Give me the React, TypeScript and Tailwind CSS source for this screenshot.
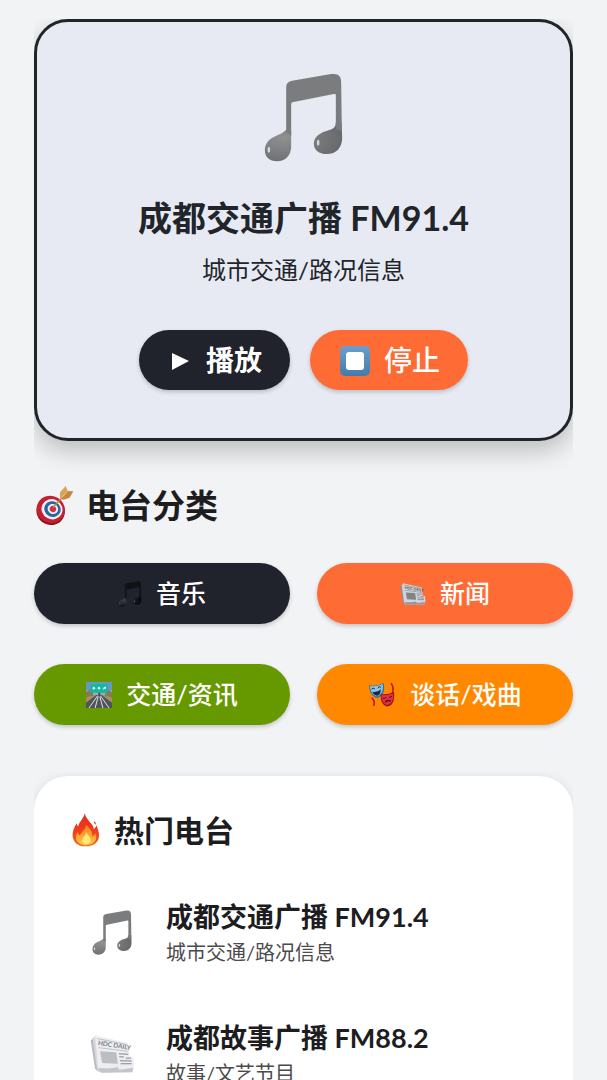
import type { ReactNode } from "react";

type IconProps = { className?: string };

function MusicNote({ className, tone = "gray" }: IconProps & { tone?: "gray" | "black" }) {
  const gray = tone === "gray";
  const fill = gray ? "#7b7c7e" : "#101216";
  const shade = gray ? "#68696c" : "#050608";
  return (
    <svg viewBox="66 38 236 267" className={className} aria-hidden="true">
      <defs>
        <radialGradient id={`note-${tone}`} cx="0.25" cy="0.4" r="0.75">
          <stop offset="0" stopColor={gray ? "#8f9092" : "#3d4047"} />
          <stop offset="1" stopColor={shade} />
        </radialGradient>
      </defs>
      <path
        fill={`url(#note-${tone})`}
        d="M132 208C124 217 112 222 101 227C80 236 68 250 68 270C68 290 82 303 104 303C130 303 147 285 147 258V208ZM281 186C281 200 275 205 262 209C235 216 215 228 215 250C215 268 230 281 254 281C282 281 300 262 300 232L298 186Z"
      />
      <path
        fill={fill}
        d="M132 214V82C132 68 138 64 150 61L262 42C288 37 297 46 297 66L299 212L281 206V104C281 101 279 100 275 101L154 125C149 126 147 128 147 133V226Z"
      />
      <ellipse cx="80" cy="268" rx="4" ry="9" fill={gray ? "#d6d7da" : "#77797e"} />
      <ellipse cx="228" cy="247" rx="4" ry="9" fill={gray ? "#d6d7da" : "#77797e"} />
    </svg>
  );
}

function Newspaper({ className, dim = false }: IconProps & { dim?: boolean }) {
  return (
    <svg viewBox="64 440 134 118" className={className} aria-hidden="true">
      <path fill={dim ? "#8b8d90" : "#b9bbc0"} d="M66 459L82 444L96 553Q84 551 79 542Z" />
      <path fill={dim ? "#c9cbce" : "#d5d7db"} d="M72 452L84 444L94 552Q86 549 84 540Z" />
      <path
        fill={dim ? "#d3d5d8" : "#eceef1"}
        d="M79 443L176 466L182 507L193 511Q198 535 190 553L98 555Q89 552 88 540Z"
      />
      <path fill={dim ? "#94969a" : "#c3c5ca"} d="M90 540Q120 545 146 538L152 546L193 540L190 553L98 555Q90 551 90 540Z" />
      <text
        x="87"
        y="472"
        transform="rotate(9 87 472)"
        fontSize="19"
        fontWeight="700"
        fontFamily="Lato, sans-serif"
        fill={dim ? "#4c4e52" : "#7c7e83"}
      >
        HDC DAILY
      </text>
      <path stroke={dim ? "#606266" : "#a9abb0"} strokeWidth="2" d="M85 453L175 471M89 480L178 491" />
      <path fill={dim ? "#808286" : "#bcbec3"} d="M94 491L142 494L147 528L100 526Z" />
      <path
        stroke={dim ? "#606266" : "#85878c"}
        strokeWidth="3"
        d="M150 498L178 500M151 507L165 508M171 512L186 511M153 519L188 520M155 528L188 528"
      />
    </svg>
  );
}

function Target({ className }: IconProps) {
  return (
    <svg viewBox="0 0 120 120" className={className} aria-hidden="true">
      <g transform="rotate(28 50 74)">
        <ellipse cx="52" cy="78" rx="43" ry="41" fill="#8f1220" />
        <ellipse cx="50" cy="73" rx="43" ry="40" fill="#c81f30" />
        <ellipse cx="53" cy="71" rx="32" ry="30" fill="#f3f1f1" />
        <ellipse cx="54" cy="70" rx="25" ry="23" fill="#2d63a0" />
        <ellipse cx="55" cy="69" rx="16" ry="15" fill="#f3f1f1" />
        <ellipse cx="55" cy="69" rx="10" ry="9" fill="#c93545" />
      </g>
      <path stroke="#b98545" strokeWidth="4" strokeLinecap="round" d="M58 66L92 30" />
      <path fill="#dba25c" d="M78 39L78 22L95 3L101 17L86 37Z" />
      <path fill="#c78641" d="M82 42L98 18L118 19L107 38L89 44Z" />
      <path stroke="#f0c78c" strokeWidth="3" d="M84 37L102 17" />
    </svg>
  );
}

function Motorway({ className }: IconProps) {
  return (
    <svg viewBox="0 0 80 80" className={className} aria-hidden="true">
      <rect width="80" height="80" fill="#6797c4" />
      <path fill="#8fb2d2" d="M0 26H80V48H0Z" />
      <path fill="#8a7a50" d="M0 31L14 22L22 42H60L68 23L80 32V60H0Z" />
      <path fill="#a5905f" d="M0 48L24 39H56L80 48V80H0Z" />
      <path fill="#505358" d="M32 40H48L80 64V80H0V64Z" />
      <path stroke="#e4e6e8" strokeWidth="3" d="M36 42L9 80M44 42L71 80M38 43L28 80M42 43L52 80" />
      <path stroke="#64747a" strokeWidth="3" d="M19 12V44M61 12V44" />
      <rect x="13" y="6" width="54" height="27" rx="4" fill="#16b79b" />
      <path fill="#e9fffa" d="M24 14l5 5-5 5-5-5ZM40 14l5 5-5 5-5-5ZM54 16L62 14L60 23L57 20L53 24L51 21L55 19Z" />
      <path fill="#3f5044" d="M38 33h6v12h-6Z" />
    </svg>
  );
}

function Masks({ className }: IconProps) {
  return (
    <svg viewBox="0 0 84 80" className={className} aria-hidden="true">
      <path fill="none" stroke="#c5172c" strokeWidth="5" d="M70 4Q80 18 74 34T78 50M10 48Q22 58 16 74" />
      <path fill="#356f9f" d="M2 10Q22 15 47 3Q52 28 42 40Q30 53 20 47Q3 38 2 10Z" />
      <path fill="#8fc2e5" d="M5 12Q24 15 44 6Q47 28 38 37Q27 47 20 42Q6 33 5 12Z" />
      <path fill="#152b44" d="M12 30Q27 34 39 22Q37 42 26 42Q17 41 12 30Z" />
      <path fill="none" stroke="#152b44" strokeWidth="3" d="M10 22Q15 17 20 21M29 19Q34 12 39 16" />
      <path fill="#9f1222" d="M38 37Q58 40 79 31Q82 58 71 70Q58 80 47 70Q37 61 38 37Z" />
      <path fill="#e0313f" d="M41 40Q60 42 76 35Q79 56 68 66Q58 74 49 67Q40 58 41 40Z" />
      <path fill="#4a0911" d="M50 64Q54 53 61 55Q69 54 70 60Q60 57 50 64Z" />
      <path fill="none" stroke="#4a0911" strokeWidth="3" d="M45 50Q50 53 54 47M64 47Q69 48 73 43" />
    </svg>
  );
}

function Fire({ className }: IconProps) {
  return (
    <svg viewBox="0 0 84 104" className={className} aria-hidden="true">
      <defs>
        <linearGradient id="flame-outer" x1="0" y1="0" x2="0" y2="1">
          <stop offset="0" stopColor="#e5281c" />
          <stop offset="0.55" stopColor="#f0401d" />
          <stop offset="1" stopColor="#ee6a1c" />
        </linearGradient>
        <linearGradient id="flame-inner" x1="0" y1="0" x2="0" y2="1">
          <stop offset="0" stopColor="#fb7a1e" />
          <stop offset="1" stopColor="#ffc940" />
        </linearGradient>
      </defs>
      <path
        fill="url(#flame-outer)"
        d="M38 1C36 16 21 27 18 41C15 38 14 34 14 31C6 42 1 54 1 67C1 89 18 102 41 102C65 102 82 89 82 68C82 57 77 49 75 38C72 42 69 46 66 50C65 40 60 34 54 28C46 20 41 12 38 1Z"
      />
      <path fill="#e93a1d" d="M66 25Q73 27 72 36Q65 33 66 25Z" />
      <path
        fill="url(#flame-inner)"
        d="M42 36C43 50 27 56 24 69C20 66 17 62 16 57C8 72 10 86 22 93C34 101 54 100 65 91C75 83 75 71 70 62C68 67 65 70 61 72C63 56 53 46 42 36Z"
      />
      <path fill="#ffe87a" d="M42 57C42 70 30 74 30 85C31 98 56 98 56 84C57 74 47 68 42 57Z" />
    </svg>
  );
}

function PlayIcon() {
  return (
    <svg viewBox="0 0 25 30" className="w-[25px] h-[30px]" aria-hidden="true">
      <path fill="#fff" d="M5 8L22 16L5 25Z" />
    </svg>
  );
}

function StopIcon() {
  return (
    <svg viewBox="0 0 32 32" className="size-8" aria-hidden="true">
      <defs>
        <linearGradient id="stop-key" x1="0" y1="0" x2="0" y2="1">
          <stop offset="0" stopColor="#6a9fcb" />
          <stop offset="1" stopColor="#467aa8" />
        </linearGradient>
      </defs>
      <rect x="2" y="2" width="30" height="30" rx="5" fill="url(#stop-key)" />
      <rect x="8" y="8" width="18" height="18" rx="3" fill="#fff" />
    </svg>
  );
}

const categories: { name: string; color: string; icon: ReactNode }[] = [
  { name: "音乐", color: "bg-[#20222c]", icon: <MusicNote tone="black" className="w-6 h-[26px]" /> },
  { name: "新闻", color: "bg-[#ff6b35]", icon: <Newspaper dim className="w-[26px] h-6" /> },
  { name: "交通/资讯", color: "bg-[#669900]", icon: <Motorway className="size-[26px]" /> },
  { name: "谈话/戏曲", color: "bg-[#ff8800]", icon: <Masks className="w-7 h-[26px]" /> },
];

const stations: { name: string; desc: string; icon: ReactNode }[] = [
  { name: "成都交通广播 FM91.4", desc: "城市交通/路况信息", icon: <MusicNote className="w-10 h-[45px]" /> },
  { name: "成都故事广播 FM88.2", desc: "故事/文艺节目", icon: <Newspaper className="w-[45px] h-10" /> },
];

function PlayerCard() {
  return (
    <section className="flex flex-col items-center rounded-[34px] border-[3px] border-[#212429] bg-[#e7eaf2] pt-[51px] pb-12 text-[#212429] shadow-[0_10px_24px_rgba(0,0,0,0.22)] [clip-path:inset(0_0_-32px_0)]">
      <MusicNote className="w-[79px] h-[89px]" />
      <h1 className="mt-[34px] text-[34px] leading-[44px] font-bold">成都交通广播 FM91.4</h1>
      <p className="mt-[14px] text-[24px] leading-8">城市交通/路况信息</p>
      <div className="mt-11 flex gap-5 text-[28px] text-white">
        <button
          type="button"
          className="flex h-[60px] items-center gap-[14px] rounded-full bg-[#20222c] px-7 font-bold shadow-[0_2px_4px_rgba(0,0,0,0.2)]"
        >
          <PlayIcon />
          播放
        </button>
        <button
          type="button"
          className="flex h-[60px] items-center gap-[14px] rounded-full bg-[#ff6b35] px-7 font-medium shadow-[0_2px_4px_rgba(0,0,0,0.2)]"
        >
          <StopIcon />
          停止
        </button>
      </div>
    </section>
  );
}

function Categories() {
  return (
    <section className="mt-[42px]">
      <h2 className="flex items-center gap-3 text-[33px] leading-[44px] font-bold">
        <Target className="size-10" />
        电台分类
      </h2>
      <div className="mt-9 grid grid-cols-2 gap-x-[27px] gap-y-10">
        {categories.map((c) => (
          <button
            key={c.name}
            type="button"
            className={`${c.color} flex h-[61px] items-center justify-center gap-[14px] rounded-full text-[25px] font-medium text-white shadow-[0_2px_4px_rgba(0,0,0,0.2)]`}
          >
            {c.icon}
            {c.name}
          </button>
        ))}
      </div>
    </section>
  );
}

function HotStations() {
  return (
    <section className="mt-[51px] rounded-[34px] bg-white pt-[34px] pb-9 shadow-[0_2px_12px_rgba(0,0,0,0.1)] [clip-path:inset(-4px_0_-32px_0)]">
      <h2 className="flex items-center gap-3 pl-9 text-[30px] leading-10 font-bold">
        <Fire className="w-8 h-[34px]" />
        热门电台
      </h2>
      <ul className="mt-[22px]">
        {stations.map((s) => (
          <li key={s.name} className="flex h-[121px] items-center gap-7 pl-[52px]">
            <span className="flex w-[52px] justify-center">{s.icon}</span>
            <div>
              <h3 className="text-[27px] leading-[38px] font-bold">{s.name}</h3>
              <p className="text-[20px] leading-8 text-[#4b4b4d]">{s.desc}</p>
            </div>
          </li>
        ))}
      </ul>
    </section>
  );
}

export default function App() {
  return (
    <main className="min-h-screen bg-[#f1f3f5] px-[34px] pt-[19px] text-[#1d1d1f] font-[Lato,'Noto_Sans_CJK_SC',sans-serif]">
      <PlayerCard />
      <Categories />
      <HotStations />
    </main>
  );
}
